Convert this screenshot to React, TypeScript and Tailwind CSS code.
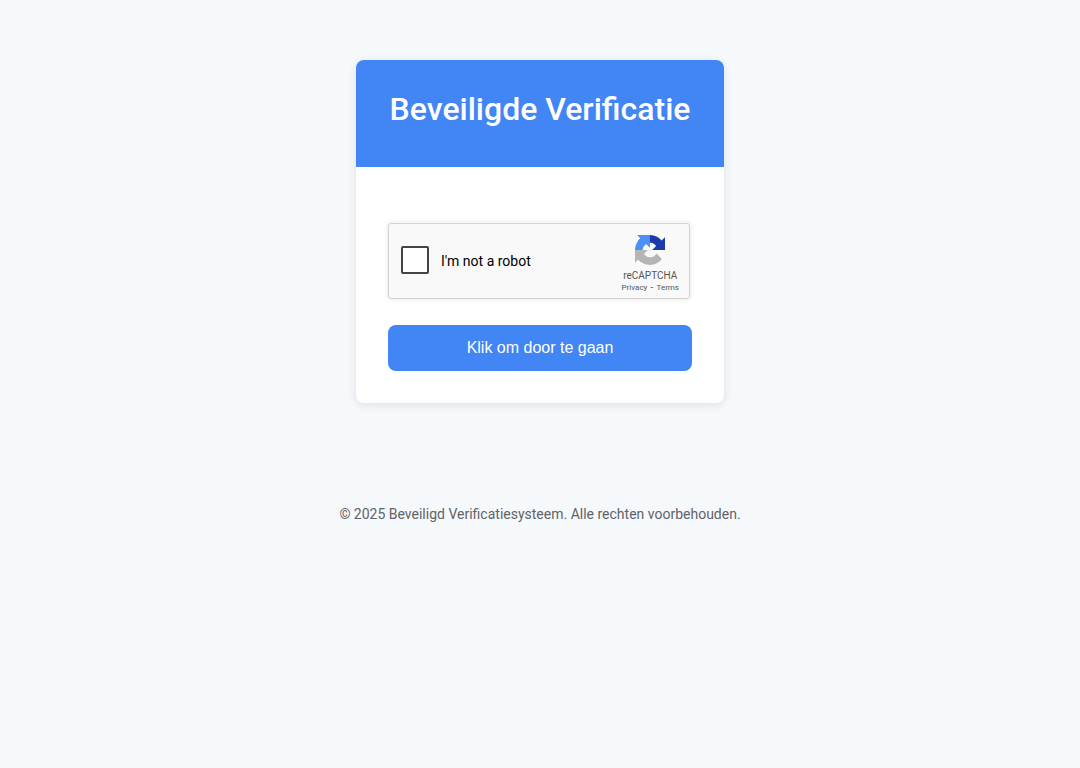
import { useState } from 'react';

function CaptchaLogo() {
    return (
        <svg viewBox="0 0 64 64" className="w-8 h-8 p-px" aria-hidden="true">
            <path
                fill="#1c3aa9"
                d="M64 31.955l-.033-1.37V4.687l-7.16 7.16C50.948 4.674 42.033.093 32.05.093c-10.4 0-19.622 4.96-25.458 12.64l11.736 11.86a15.55 15.55 0 0 1 4.754-5.334c2.05-1.6 4.952-2.906 8.968-2.906.485 0 .86.057 1.135.163 4.976.393 9.288 3.14 11.828 7.124l-8.307 8.307L64 31.953"
            />
            <path
                fill="#4a90f5"
                d="M31.862.094l-1.37.033H4.594l7.16 7.16C4.58 13.147 0 22.06 0 32.046c0 10.4 4.96 19.622 12.64 25.458L24.5 45.768a15.55 15.55 0 0 1-5.334-4.754c-1.6-2.05-2.906-4.952-2.906-8.968 0-.485.057-.86.163-1.135.393-4.976 3.14-9.288 7.124-11.828l8.307 8.307L31.86.095"
            />
            <path
                fill="#b5b5b5"
                d="M.001 32.045l.033 1.37v25.898l7.16-7.16c5.86 7.173 14.774 11.754 24.76 11.754 10.4 0 19.622-4.96 25.458-12.64l-11.736-11.86a15.55 15.55 0 0 1-4.754 5.334c-2.05 1.6-4.952 2.906-8.968 2.906-.485 0-.86-.057-1.135-.163-4.976-.393-9.288-3.14-11.828-7.124l8.307-8.307L0 32.047"
            />
        </svg>
    );
}

interface CaptchaProps {
    checked: boolean;
    onChange: (checked: boolean) => void;
}

function Captcha({ checked, onChange }: CaptchaProps) {
    return (
        <div className="flex w-[302px] max-w-full justify-between rounded-[3px] border border-[#d3d3d3] bg-[#f9f9f9] shadow-[0_0_4px_1px_rgba(0,0,0,0.08)]">
            <div className="flex h-[74px] items-center gap-3 pl-3">
                <input
                    id="captcha"
                    type="checkbox"
                    checked={checked}
                    onChange={(e) => onChange(e.target.checked)}
                    className="mb-0.5 h-7 w-7 appearance-none rounded-[2px] border-2 border-[#444] bg-white checked:bg-[#4285f4]"
                />
                <label htmlFor="captcha" className="text-sm text-black">
                    I'm not a robot
                </label>
            </div>
            <div className="flex flex-col items-center pt-[10px] pr-[10px] text-[#555]">
                <CaptchaLogo />
                <div className="mt-1 text-[10px] leading-3">reCAPTCHA</div>
                <div className="flex gap-[3px] text-[8px] leading-3">
                    <a href="#privacy">Privacy</a>
                    <span className="font-bold">-</span>
                    <a href="#terms">Terms</a>
                </div>
            </div>
        </div>
    );
}

export default function App() {
    const [checked, setChecked] = useState(false);

    return (
        <div className="flex min-h-screen flex-col items-center bg-[#f6f9fc] pt-[60px] font-[Roboto,sans-serif]">
            {/* Card */}
            <main className="min-w-[368px] overflow-hidden rounded-lg bg-white shadow-[0_2px_10px_rgba(0,0,0,0.1)]">
                <header className="bg-[#4285f4] px-8 pt-[30px] pb-[39px]">
                    <h1 className="text-center text-[32px] leading-[38px] font-medium text-white">
                        Beveiligde Verificatie
                    </h1>
                </header>
                <form className="px-8 pt-14 pb-8" onSubmit={(e) => e.preventDefault()}>
                    <Captcha checked={checked} onChange={setChecked} />
                    <button
                        type="submit"
                        className="mt-[26px] h-[46px] w-full rounded-lg bg-[#4285f4] font-['Liberation_Sans',Arial,sans-serif] text-base text-white"
                    >
                        Klik om door te gaan
                    </button>
                </form>
            </main>

            {/* Footer */}
            <footer className="mt-[100px] text-center text-sm leading-[22px] text-[#5f6368]">
                © 2025 Beveiligd Verificatiesysteem. Alle rechten voorbehouden.
            </footer>
        </div>
    );
}
